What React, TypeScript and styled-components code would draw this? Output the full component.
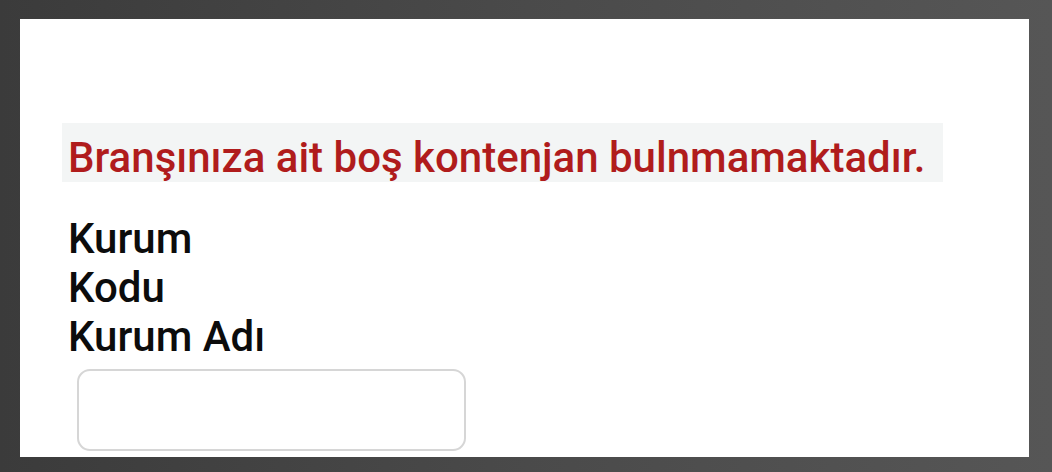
import styled, { createGlobalStyle } from "styled-components";

const GlobalStyle = createGlobalStyle`
  html, body {
    margin: 0;
    padding: 0;
    width: 1052px;
    height: 472px;
    overflow: hidden;
  }
  body {
    background: linear-gradient(to right, #3b3b3b, #4a4a4a 50%, #565656);
  }
`;

const Frame = styled.div`
  box-sizing: border-box;
  width: 1052px;
  height: 472px;
  padding: 19px 23px 15px 20px;
`;

const Panel = styled.div`
  height: 100%;
  background: #ffffff;
  padding-top: 104px;
  padding-left: 42px;
  box-sizing: border-box;
  overflow: hidden;
`;

const Alert = styled.div`
  box-sizing: border-box;
  width: 881px;
  height: 59px;
  background: #f3f5f5;
  color: #b01c1c;
  font-family: Roboto, "Liberation Sans", sans-serif;
  font-size: 42px;
  font-weight: 500;
  line-height: 49px;
  padding: 10px 0 0 6px;
  white-space: nowrap;
`;

const Labels = styled.div`
  display: flex;
  flex-direction: column;
  padding-left: 6px;
  margin-top: 32px;
`;

const Label = styled.span`
  font-family: Roboto, "Liberation Sans", sans-serif;
  font-size: 42px;
  font-weight: 500;
  line-height: 49px;
  color: #0c0c0c;
`;

const TextBox = styled.input`
  display: block;
  box-sizing: border-box;
  margin: 8px 0 0 15px;
  width: 389px;
  height: 82px;
  border: 2px solid #d6d6d6;
  border-radius: 13px;
  background: #ffffff;
  outline: none;
`;

export default function App() {
  return (
    <>
      <GlobalStyle />
      <Frame>
        <Panel>
          <Alert>Branşınıza ait boş kontenjan bulnmamaktadır.</Alert>
          <Labels>
            <Label>Kurum</Label>
            <Label>Kodu</Label>
            <Label>Kurum Adı</Label>
          </Labels>
          <TextBox type="text" />
        </Panel>
      </Frame>
    </>
  );
}
